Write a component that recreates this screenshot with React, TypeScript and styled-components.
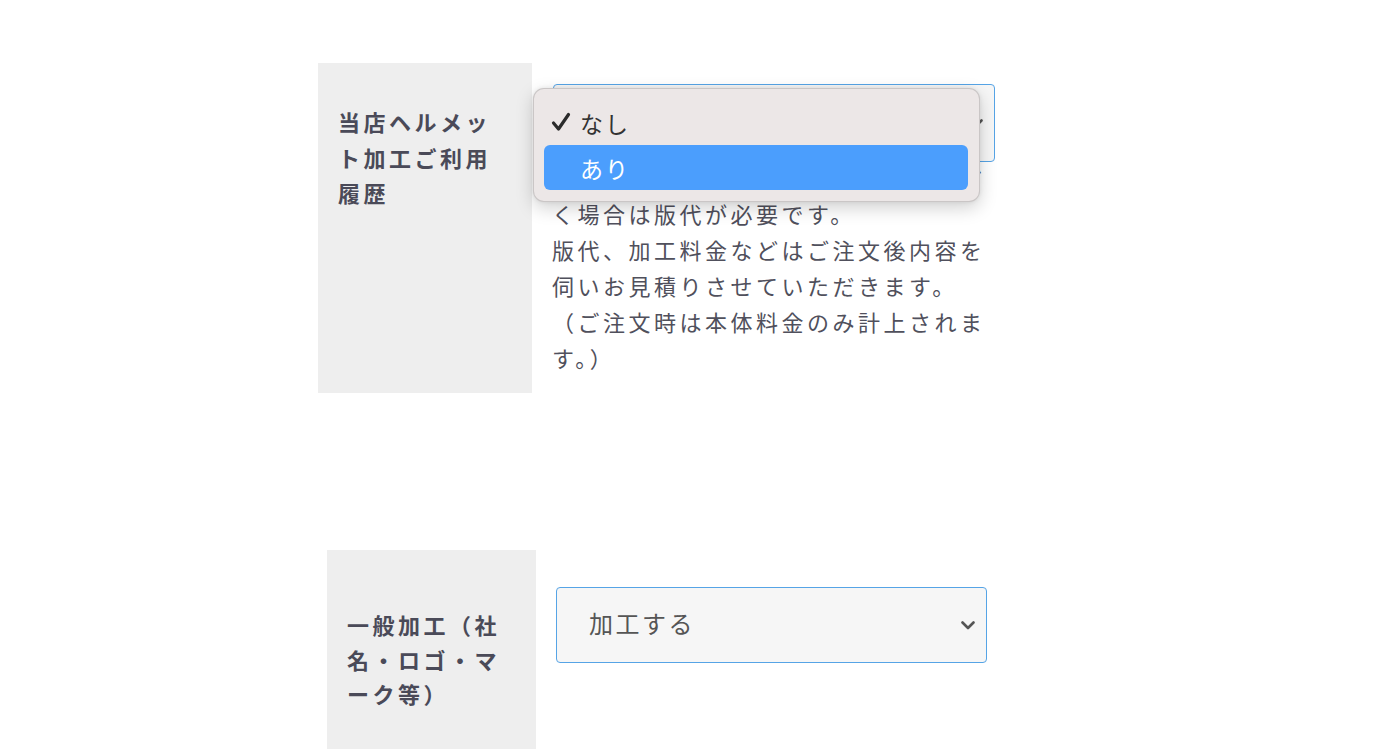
import React from "react";
import styled, { createGlobalStyle } from "styled-components";

const GlobalStyle = createGlobalStyle`
  html, body {
    margin: 0;
    padding: 0;
    background: #ffffff;
    overflow: hidden;
  }
  body {
    font-family: "Noto Sans CJK JP", "Noto Sans", sans-serif;
  }
`;

const Page = styled.div`
  height: 749px;
  padding-top: 63px;
  box-sizing: border-box;
  display: flex;
  flex-direction: column;
  overflow: hidden;
`;

const Row = styled.div<{ $left: number; $top?: number }>`
  display: flex;
  align-items: flex-start;
  margin-left: ${(p) => p.$left}px;
  margin-top: ${(p) => p.$top ?? 0}px;
`;

const Label = styled.div<{ $w: number; $h: number; $pt: number; $lh: number }>`
  flex: none;
  box-sizing: border-box;
  width: ${(p) => p.$w}px;
  height: ${(p) => p.$h}px;
  padding: ${(p) => p.$pt}px 20px 0 20px;
  background: #eeeeee;
  color: #4a4a58;
  font-weight: 700;
  font-size: 22px;
  letter-spacing: 3.5px;
  line-height: ${(p) => p.$lh}px;
`;

const Content = styled.div<{ $pt: number }>`
  padding: ${(p) => p.$pt}px 0 0 20px;
`;

const SelectWrap = styled.div`
  position: relative;
`;

const SelectBox = styled.div<{ $w: number; $h: number; $ml: number }>`
  box-sizing: border-box;
  width: ${(p) => p.$w}px;
  height: ${(p) => p.$h}px;
  margin-left: ${(p) => p.$ml}px;
  border: 1px solid #56a4e6;
  border-radius: 4px;
  background: #f6f6f6;
  display: flex;
  align-items: center;
  justify-content: space-between;
  padding: 0 11px 5px 32px;
  color: #555555;
  font-size: 24px;
  letter-spacing: 2.5px;
`;

const ChevronBox = styled.span`
  display: flex;
  margin-top: 5px;
`;

const Chevron = () => (
  <ChevronBox>
    <svg width="14" height="9" viewBox="0 0 14 9">
      <polyline
        points="1.5,1.5 7,7 12.5,1.5"
        fill="none"
        stroke="#555"
        strokeWidth="2.6"
        strokeLinecap="round"
        strokeLinejoin="round"
      />
    </svg>
  </ChevronBox>
);

const Popup = styled.div`
  position: absolute;
  left: -19px;
  top: 4px;
  width: 447px;
  box-sizing: border-box;
  padding: 11px 11px 11px 10px;
  background: #ece7e7;
  border: 1px solid rgba(0, 0, 0, 0.14);
  border-radius: 11px;
  box-shadow: 0 6px 18px rgba(0, 0, 0, 0.18), 0 0 4px rgba(0, 0, 0, 0.08);
  z-index: 2;
`;

const Option = styled.div<{ $active?: boolean }>`
  position: relative;
  height: 45px;
  display: flex;
  align-items: center;
  padding-left: 36px;
  border-radius: 6px;
  font-size: 23px;
  letter-spacing: 2px;
  color: ${(p) => (p.$active ? "#ffffff" : "#333333")};
  background: ${(p) => (p.$active ? "#4b9efd" : "transparent")};
`;

const CheckMark = styled.span`
  position: absolute;
  left: 7px;
  top: 12px;
  display: flex;
`;

const Check = () => (
  <svg width="20" height="20" viewBox="0 0 20 20">
    <polyline
      points="2.5,11 7.5,17 17.5,2.5"
      fill="none"
      stroke="#2b2b2b"
      strokeWidth="3.2"
      strokeLinecap="round"
      strokeLinejoin="round"
    />
  </svg>
);

const Note = styled.p`
  margin: -3px 0 0 0;
  width: 442px;
  color: #50505c;
  font-size: 22px;
  letter-spacing: 3.5px;
  line-height: 36px;
`;

export default function App() {
  return (
    <>
      <GlobalStyle />
      <Page>
        <Row $left={318}>
          <Label $w={214} $h={330} $pt={41} $lh={35.5}>
            当店ヘルメット加工ご利用履歴
          </Label>
          <Content $pt={21}>
            <SelectWrap>
              <SelectBox $w={442} $h={78} $ml={1}>
                <span>なし</span>
                <Chevron />
              </SelectBox>
              <Popup>
                <Option>
                  <CheckMark>
                    <Check />
                  </CheckMark>
                  なし
                </Option>
                <Option $active>あり</Option>
              </Popup>
            </SelectWrap>
            <Note>
              初めてヘルメット加工をさせていただく場合は版代が必要です。
              <br />
              版代、加工料金などはご注文後内容を伺いお見積りさせていただきます。（ご注文時は本体料金のみ計上されます。）
            </Note>
          </Content>
        </Row>
        <Row $left={327} $top={157}>
          <Label $w={209} $h={230} $pt={57} $lh={34.5}>
            一般加工（社名・ロゴ・マーク等）
          </Label>
          <Content $pt={37}>
            <SelectBox $w={431} $h={76} $ml={0}>
              <span>加工する</span>
              <Chevron />
            </SelectBox>
          </Content>
        </Row>
      </Page>
    </>
  );
}
